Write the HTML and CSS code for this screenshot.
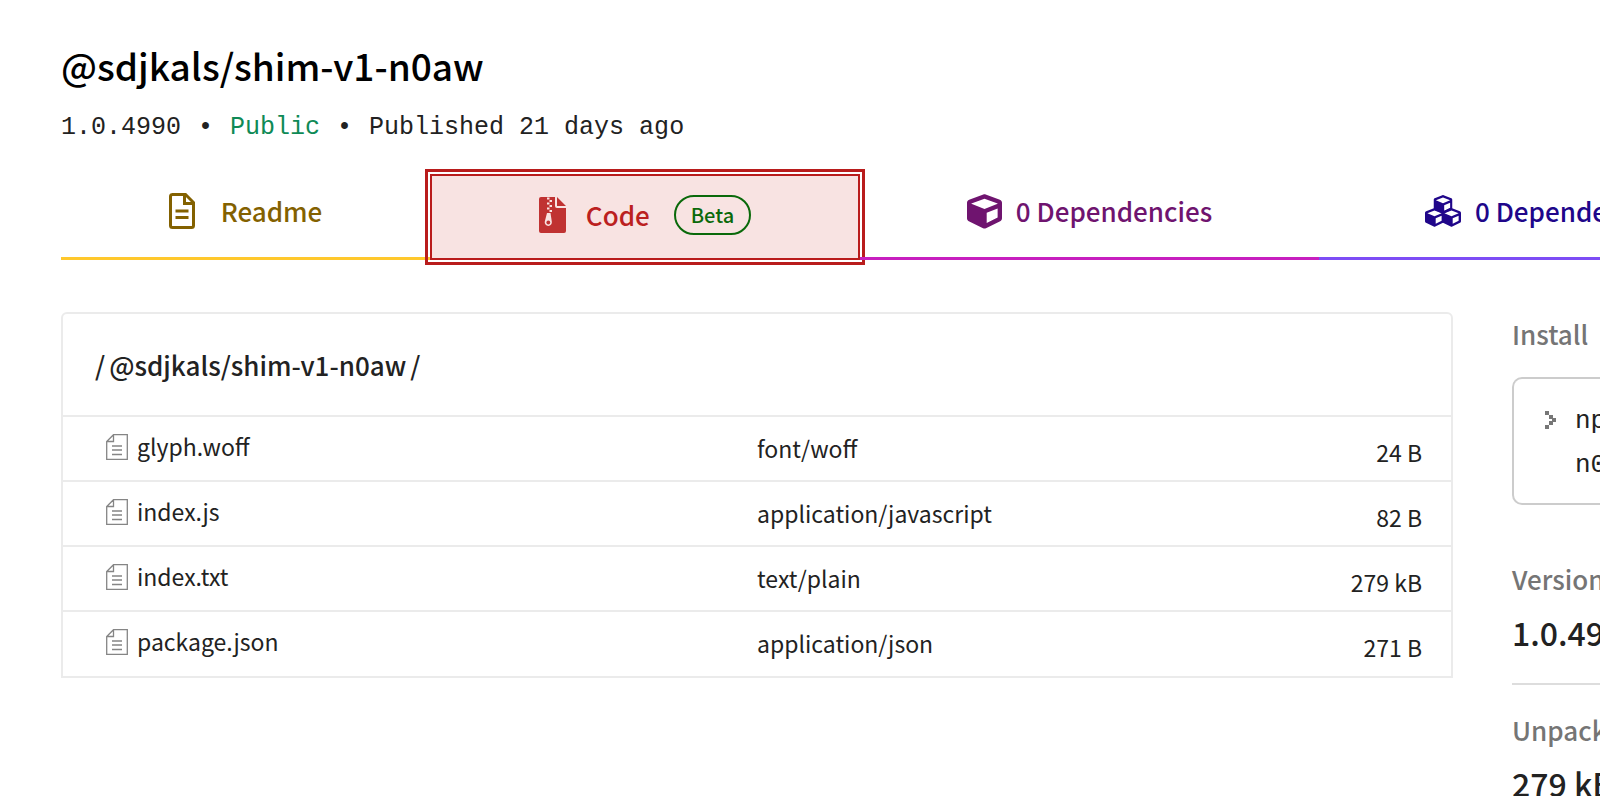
FILE: index.html
```html
<!DOCTYPE html>
<html lang="en">
<head>
<meta charset="utf-8">
<title>@sdjkals/shim-v1-n0aw</title>
<link rel="stylesheet" href="styles.css">
</head>
<body>
<svg class="defs" aria-hidden="true">
  <symbol id="file" viewBox="0 0 22 26"><path d="M7.500 .7H21.300V25.300H.7V7.500ZM.7 7.500H7.500V.7M6 12H16M6 16H16M6 20.500H16" fill="none" stroke="#858585" stroke-width="1.300"/></symbol>
  <symbol id="cube" viewBox="0 0 512 512"><path fill="currentColor" d="M239.1 6.3l-208 78c-18.700 7-31.100 25-31.100 45v225.100c0 18.200 10.300 34.800 26.500 42.900l208 104c13.500 6.800 29.400 6.800 42.900 0l208-104c16.300-8.100 26.500-24.800 26.500-42.900V129.300c0-20-12.400-37.900-31.100-44.900l-208-78C262 2.200 250 2.200 239.100 6.300zM256 68.400l192 72v1.100l-192 78-192-78v-1.100l192-72zm32 356V275.500l160-65v133.900l-160 80z"/></symbol>
</svg>
<div class="page">
  <header>
    <h1 class="title">@sdjkals/shim-v1-n0aw</h1>
    <p class="meta"><span>1.0.4990</span><span>•</span><span class="public">Public</span><span>•</span><span>Published 21 days ago</span></p>
  </header>
  <nav class="tabs">
    <a class="tab readme" href="#readme">
      <svg width="26" height="36" viewBox="0 0 26 36" aria-hidden="true"><path d="M3 1.500H16.500L24.500 9.500V32.500Q24.500 34.500 22.500 34.500H3.500Q1.500 34.500 1.500 32.500V3.500Q1.500 1.500 3.500 1.500M15.500 2V10.500H24M6.500 18H19.500M6.500 24.500H19.500" fill="none" stroke="currentColor" stroke-width="3"/></svg>
      <span>Readme</span>
    </a>
    <a class="tab code" href="#code" aria-current="page">
      <span class="code-inner">
        <svg width="27" height="36" viewBox="0 0 27 36" aria-hidden="true"><path fill="#c03232" d="M2 0H16V9Q16 11 18 11H27V34Q27 36 25 36H2Q0 36 0 34V2Q0 0 2 0ZM18 0L27 9H18Z"/><path d="M8 1.500h2.500M10.500 4h2.500M8 6.500h2.500M10.500 9h2.500M8 11.500h2.500M10.500 14h2.500" stroke="#f8e3e2" stroke-width="1.800"/><path fill="#f8e3e2" d="M8 16H11.500L12.800 24.500A3.600 3.600 0 1 1 5.800 24.500Z"/><circle cx="9.300" cy="25.500" r="1.900" fill="#c03232"/></svg>
        <span>Code</span>
        <span class="beta">Beta</span>
      </span>
    </a>
    <a class="tab dependencies" href="#dependencies">
      <svg width="35" height="35" aria-hidden="true"><use href="#cube"/></svg>
      <span>0 Dependencies</span>
    </a>
    <a class="tab dependents" href="#dependents">
      <svg width="36" height="32" viewBox="0 0 36 32" aria-hidden="true"><use href="#cube" x="8.500" y="0" width="19" height="19"/><use href="#cube" x="0" y="13" width="19" height="19"/><use href="#cube" x="17" y="13" width="19" height="19"/></svg>
      <span>0 Dependents</span>
    </a>
  </nav>
  <div class="content">
    <main class="files">
      <h2 class="path"><span>/</span><a href="#root">@sdjkals/shim-v1-n0aw</a><span>/</span></h2>
      <table class="list">
        <tr><td class="name"><a href="#glyph"><svg width="22" height="26" aria-hidden="true"><use href="#file"/></svg>glyph.woff</a></td><td class="type">font/woff</td><td class="size">24 B</td></tr>
        <tr><td class="name"><a href="#indexjs"><svg width="22" height="26" aria-hidden="true"><use href="#file"/></svg>index.js</a></td><td class="type">application/javascript</td><td class="size">82 B</td></tr>
        <tr><td class="name"><a href="#indextxt"><svg width="22" height="26" aria-hidden="true"><use href="#file"/></svg>index.txt</a></td><td class="type">text/plain</td><td class="size">279 kB</td></tr>
        <tr><td class="name"><a href="#package"><svg width="22" height="26" aria-hidden="true"><use href="#file"/></svg>package.json</a></td><td class="type">application/json</td><td class="size">271 B</td></tr>
      </table>
    </main>
    <aside class="side">
      <h3 class="label">Install</h3>
      <div class="install">
        <svg width="11" height="18" viewBox="0 0 11 18" aria-hidden="true"><path fill="#777" d="M0 0h4v4H0zM4 4h4v4H4zM7 7h4v4H7zM4 10h4v4H4zM0 14h4v4H0z"/></svg>
        <code>npm i @sdjkals/shim-v1-<br>n0aw</code>
      </div>
      <h3 class="label">Version</h3>
      <p class="value">1.0.4990</p>
      <h3 class="label ruled">Unpacked Size</h3>
      <p class="value">279 kB</p>
    </aside>
  </div>
</div>
</body>
</html>
```
FILE: styles.css
```css
* { box-sizing: border-box; }
body {
  margin: 0;
  background: #fff;
  color: #222;
  font-family: "Noto Sans CJK SC", "Open Sans", sans-serif;
  font-size: 23px;
  line-height: 32px;
}
h1, h2, h3, p { margin: 0; }
a { color: inherit; text-decoration: none; }
svg { flex: none; }
.defs { position: absolute; width: 0; height: 0; }
.page {
  height: 100vh;
  padding: 40px 0 0 61px;
  overflow: hidden;
}
.title {
  color: #000;
  font-size: 37px;
  font-weight: 500;
  line-height: 50px;
}
.meta {
  display: flex;
  gap: 17px;
  padding-top: 20px;
  font-family: "Liberation Mono", monospace;
  font-size: 25px;
  line-height: 36px;
}
.public { color: #0f8a56; }
.tabs {
  display: grid;
  grid-template-columns: minmax(0, 364fr) minmax(0, 440fr) minmax(0, 454fr) minmax(0, 281fr);
  grid-template-rows: 91px;
  margin-top: 23px;
  font-size: 26px;
  font-weight: 500;
  white-space: nowrap;
}
.tab {
  display: flex;
  align-items: center;
  justify-content: center;
  border-bottom: 3px solid;
}
.readme {
  gap: 26px;
  margin-right: -5px;
  padding-bottom: 4px;
  border-color: #ffc82c;
}
.readme span, .readme svg { color: #836100; }
.code {
  height: 96px;
  padding: 2px;
  border: 3px solid #b91c1c;
  color: #bb2020;
  z-index: 1;
}
.code-inner {
  display: flex;
  flex: 1;
  align-items: center;
  align-self: stretch;
  justify-content: center;
  gap: 20px;
  padding-bottom: 4px;
  border: 2px solid #b91c1c;
  background: #f8e3e2;
}
.beta {
  margin-left: 4px;
  padding: 3px 15px;
  border: 2px solid #0a690a;
  border-radius: 20px;
  color: #0a690a;
  font-size: 20px;
  line-height: 30px;
}
.dependencies {
  gap: 14px;
  margin-left: -5px;
  padding-bottom: 4px;
  border-color: #c71fbf;
  z-index: 2;
}
.dependencies span, .dependencies svg { color: #6f146f; }
.dependents {
  gap: 14px;
  justify-content: flex-start;
  padding: 0 0 4px 106px;
  border-color: #7d4df5;
}
.dependents span, .dependents svg { color: #20068a; }
.content {
  display: grid;
  grid-template-columns: 1fr 88px;
  gap: 59px;
  margin-top: 52px;
}
.files {
  align-self: start;
  border: 2px solid #ebebeb;
  border-radius: 6px 6px 0 0;
}
.path {
  display: flex;
  gap: 4px;
  padding: 35px 32px 34px;
  font-size: 26px;
  font-weight: 500;
}
.list {
  width: 100%;
  border-collapse: collapse;
  table-layout: fixed;
}
.list td {
  height: 65px;
  padding: 0 0 2px;
  border-top: 2px solid #ebebeb;
}
.list .name { width: 50%; padding: 0 0 6px 43px; }
.name a { display: flex; align-items: center; gap: 9px; }
.name svg { margin-top: 2px; }
.list .size { padding: 6px 29px 0 0; text-align: right; }
.side { white-space: nowrap; }
.label {
  padding-top: 6px;
  color: #757575;
  font-size: 26px;
  font-weight: 500;
}
.install {
  display: flex;
  gap: 19px;
  height: 128px;
  margin: 27px 0 52px;
  padding: 20px 0 0 31px;
  border: 2px solid #ccc;
  border-right: 0;
  border-radius: 10px 0 0 10px;
  overflow: hidden;
}
.install svg { margin-top: 12px; }
.install code {
  font-family: "Liberation Mono", monospace;
  font-size: 26px;
  line-height: 44px;
}
.value {
  padding: 13px 0 27px;
  font-size: 32px;
  font-weight: 500;
  line-height: 48px;
}
.ruled { padding-top: 29px; border-top: 2px solid #ddd; }
```
